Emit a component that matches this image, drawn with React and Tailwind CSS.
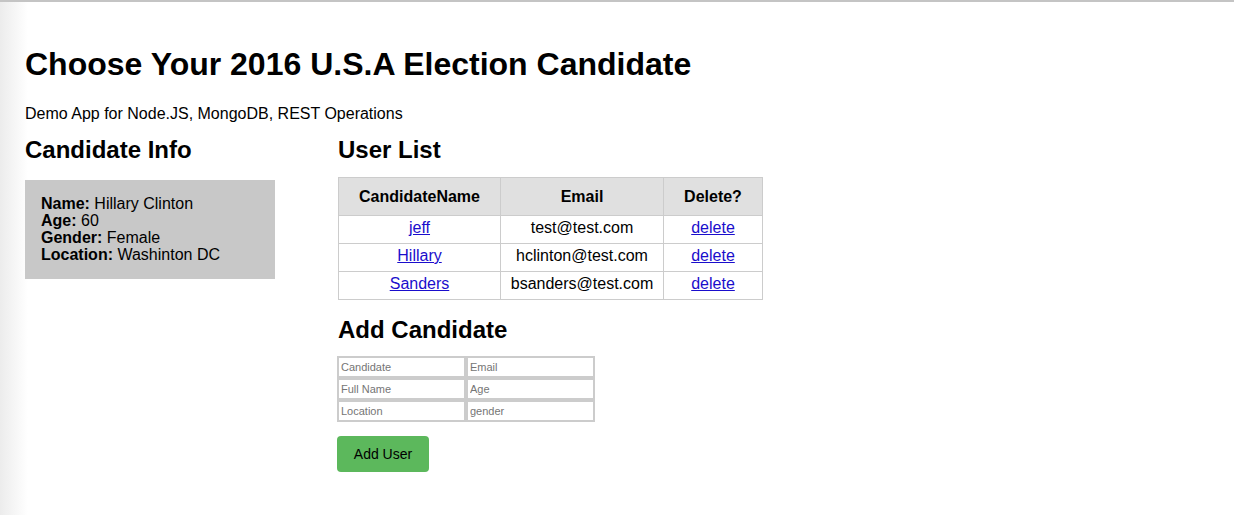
import React from 'react';

const users = [
  { name: 'jeff', email: 'test@test.com' },
  { name: 'Hillary', email: 'hclinton@test.com' },
  { name: 'Sanders', email: 'bsanders@test.com' },
];

const fields = [
  ['Candidate', 'Email'],
  ['Full Name', 'Age'],
  ['Location', 'gender'],
];

export default function App() {
  return (
    <div className="min-h-[515px] w-full border-t-2 border-[#c4c4c4] bg-[linear-gradient(to_right,#ececec,#ffffff_28px)] font-['Liberation_Sans',Arial,sans-serif] text-black">
      <div className="pl-[25px] pt-[42px]">
        <h1 className="text-[32px] font-bold leading-[40px]">Choose Your 2016 U.S.A Election Candidate</h1>
        <p className="mt-[20px] text-[16px] leading-[20px]">Demo App for Node.JS, MongoDB, REST Operations</p>

        <div className="mt-[10px] flex">
          {/* Candidate info */}
          <div className="w-[313px] shrink-0">
            <h2 className="text-[24px] font-bold leading-[32px]">Candidate Info</h2>
            <div className="mt-[14px] w-[250px] bg-[#c8c8c8] px-[16px] pt-[15px] pb-[16px] text-[16px] leading-[17px]">
              <p><strong>Name:</strong> Hillary Clinton</p>
              <p><strong>Age:</strong> 60</p>
              <p><strong>Gender:</strong> Female</p>
              <p><strong>Location:</strong> Washinton DC</p>
            </div>
          </div>

          {/* User list */}
          <div>
            <h2 className="text-[24px] font-bold leading-[32px]">User List</h2>
            <table className="mt-[11px] border-collapse text-[16px]">
              <thead>
                <tr className="bg-[#e0e0e0]">
                  <th className="h-[38px] w-[162px] border border-[#cccccc] font-bold">CandidateName</th>
                  <th className="h-[38px] w-[163px] border border-[#cccccc] font-bold">Email</th>
                  <th className="h-[38px] w-[99px] border border-[#cccccc] font-bold">Delete?</th>
                </tr>
              </thead>
              <tbody>
                {users.map(u => (
                  <tr key={u.name}>
                    <td className="h-[28px] border border-[#cccccc] pb-[3px] text-center">
                      <a href="#" className="text-[#1a0dcc] underline">{u.name}</a>
                    </td>
                    <td className="h-[28px] border border-[#cccccc] pb-[3px] text-center">{u.email}</td>
                    <td className="h-[28px] border border-[#cccccc] pb-[3px] text-center">
                      <a href="#" className="text-[#1a0dcc] underline">delete</a>
                    </td>
                  </tr>
                ))}
              </tbody>
            </table>

            <h2 className="mt-[14px] text-[24px] font-bold leading-[32px]">Add Candidate</h2>
            <div className="-ml-px mt-[10px] flex flex-col">
              {fields.map(row => (
                <div key={row[0]} className="flex">
                  {row.map(f => (
                    <input
                      key={f}
                      type="text"
                      placeholder={f}
                      className="h-[22px] w-[129px] border-2 border-[#cccccc] px-[2px] text-[11px] placeholder:text-[#757575] focus:outline-none"
                    />
                  ))}
                </div>
              ))}
            </div>
            <button className="-ml-px mt-[14px] h-[36px] w-[92px] rounded-[4px] bg-[#5cb85c] text-[14px] text-black">
              Add User
            </button>
          </div>
        </div>
      </div>
    </div>
  );
}
